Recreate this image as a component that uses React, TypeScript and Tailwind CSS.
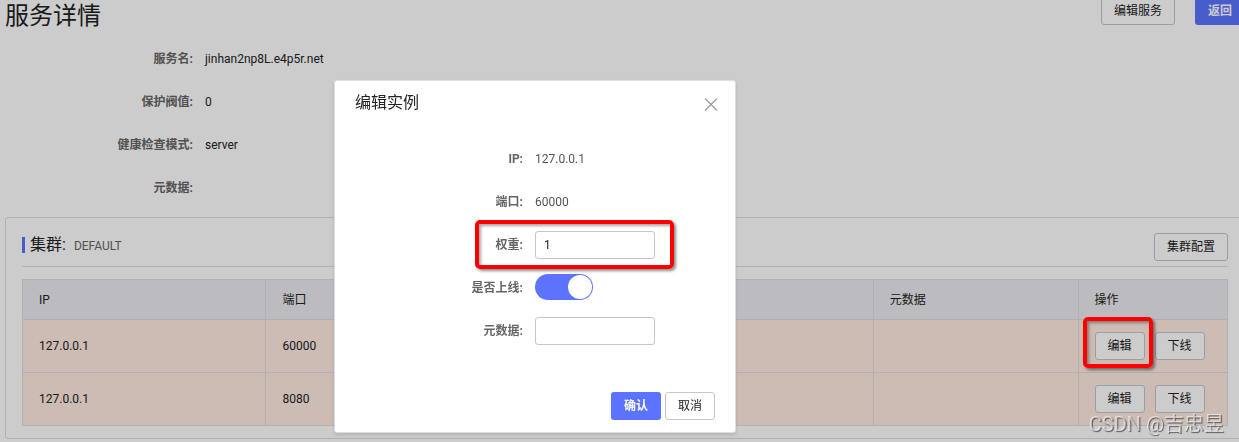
import React, { useState } from "react";

const instances = [
  { ip: "127.0.0.1", port: 60000, marked: true },
  { ip: "127.0.0.1", port: 8080, marked: false },
];

const service = [
  { label: "服务名:", value: "jinhan2np8L.e4p5r.net" },
  { label: "保护阀值:", value: "0" },
  { label: "健康检查模式:", value: "server" },
  { label: "元数据:", value: "" },
];

function Button({ children, primary = false }: { children: React.ReactNode; primary?: boolean }) {
  return (
    <button
      type="button"
      className={
        primary
          ? "h-7 shrink-0 rounded-[3px] bg-[#5c73ff] px-[13px] text-xs font-bold text-white"
          : "h-7 shrink-0 rounded-[3px] border border-[#c4c6cf] bg-white px-3 text-xs text-[#222]"
      }
    >
      {children}
    </button>
  );
}

function Mark({ className }: { className: string }) {
  return (
    <span
      aria-hidden="true"
      className={`pointer-events-none absolute z-30 rounded-[5px] border-4 border-[#fe0000] shadow-[2px_2px_3px_rgba(0,0,0,0.45),inset_2px_2px_3px_rgba(0,0,0,0.35)] ${className}`}
    />
  );
}

function Row({ label, htmlFor, children }: { label: string; htmlFor?: string; children: React.ReactNode }) {
  return (
    <div className="relative flex h-7 items-center">
      <label htmlFor={htmlFor} className="w-1/2 shrink-0 pr-3 text-right font-bold">
        {label}
      </label>
      {children}
    </div>
  );
}

function EditDialog() {
  const [weight, setWeight] = useState("1");
  const [online, setOnline] = useState(true);
  const [meta, setMeta] = useState("");
  const field =
    "h-7 w-[120px] rounded-[3px] border border-[#c4c6cf] bg-white px-2 text-xs text-[#222] outline-none";
  return (
    <div className="fixed inset-0 z-20 flex items-start justify-center bg-black/20 pt-20 pr-[169px]">
      <section
        role="dialog"
        aria-labelledby="dialog-title"
        className="w-[402px] rounded-[3px] border border-[#dcdee3] bg-white shadow-[0_2px_4px_rgba(0,0,0,0.12)]"
      >
        <header className="flex items-start justify-between px-5 pt-3">
          <h2 id="dialog-title" className="text-base leading-5 text-[#222]">编辑实例</h2>
          <button type="button" aria-label="关闭" className="mt-1 -mr-1">
            <svg viewBox="0 0 16 16" className="size-4" fill="none" stroke="#999" strokeWidth="1.2">
              <path d="M2 1.5 14 13.5M14 1.5 2 13.5" />
            </svg>
          </button>
        </header>
        <form className="flex flex-col gap-[15px] px-5 pt-8 text-xs text-[#666]">
          <Row label="IP:">
            <span className="text-[#555]">127.0.0.1</span>
          </Row>
          <Row label="端口:">
            <span className="text-[#555]">60000</span>
          </Row>
          <Row label="权重:" htmlFor="weight">
            <input id="weight" className={field} value={weight} onChange={(e) => setWeight(e.target.value)} />
            <Mark className="-top-[11px] left-[120px] h-[49px] w-[199px]" />
          </Row>
          <Row label="是否上线:" htmlFor="online">
            <input
              id="online"
              type="checkbox"
              role="switch"
              checked={online}
              onChange={(e) => setOnline(e.target.checked)}
              className="flex h-[26px] w-[58px] appearance-none self-start rounded-full bg-[#c4c6cf] p-px before:size-6 before:rounded-full before:bg-white checked:justify-end checked:bg-[#5c73ff]"
            />
          </Row>
          <Row label="元数据:" htmlFor="meta">
            <input id="meta" className={field} value={meta} onChange={(e) => setMeta(e.target.value)} />
          </Row>
        </form>
        <footer className="flex justify-end gap-1 px-5 pt-[47px] pb-3">
          <Button primary>确认</Button>
          <Button>取消</Button>
        </footer>
      </section>
    </div>
  );
}

export default function App() {
  const cell = "border border-[#dcdee3] px-4 text-left font-normal";
  return (
    <div className="min-h-screen overflow-hidden bg-white font-['Roboto','Noto_Sans_CJK_SC',sans-serif] text-xs text-[#222]">
      <main className="-mt-[3px] -mr-[6px] pl-[5px]">
        <header className="flex h-12 items-start justify-between">
          <h1 className="text-2xl leading-[38px]">服务详情</h1>
          <div className="flex gap-5">
            <Button>编辑服务</Button>
            <Button primary>返回</Button>
          </div>
        </header>
        <dl className="flex flex-col gap-[15px]">
          {service.map((item) => (
            <div key={item.label} className="flex h-7 items-center">
              <dt className="w-[200px] pr-3 text-right font-bold text-[#666]">{item.label}</dt>
              <dd>{item.value}</dd>
            </div>
          ))}
        </dl>
        <section className="mt-[15px] rounded-[3px] border border-[#dcdee3] px-4 pt-[15px] pb-3">
          <div className="flex items-start justify-between border-b border-[#dcdee3] pb-[5px]">
            <div className="flex items-center">
              <span className="mr-[5px] h-4 w-[3px] bg-[#5c73ff]" />
              <h2 className="flex items-baseline gap-2 text-base leading-6">
                集群:
                <span className="text-xs text-[#666]">DEFAULT</span>
              </h2>
            </div>
            <Button>集群配置</Button>
          </div>
          <table className="mt-3 w-full table-fixed border-collapse">
            <colgroup>
              <col className="w-[20.2%]" />
              <col className="w-[17%]" />
              <col />
              <col className="w-[17%]" />
              <col className="w-[12.4%]" />
            </colgroup>
            <thead>
              <tr className="h-10 bg-[#ebecf0]">
                <th className={cell}>IP</th>
                <th className={cell}>端口</th>
                <th className={cell} />
                <th className={cell}>元数据</th>
                <th className={cell}>操作</th>
              </tr>
            </thead>
            <tbody>
              {instances.map((row) => (
                <tr key={row.port} className="h-[53px] bg-[#ffebe2]">
                  <td className={cell}>{row.ip}</td>
                  <td className={cell}>{row.port}</td>
                  <td className={cell} />
                  <td className={cell} />
                  <td className={cell}>
                    <div className="relative flex gap-[10px]">
                      <Button>编辑</Button>
                      <Button>下线</Button>
                      {row.marked && <Mark className="-top-[15px] -left-3 h-[51px] w-[70px]" />}
                    </div>
                  </td>
                </tr>
              ))}
            </tbody>
          </table>
        </section>
      </main>
      <EditDialog />
      <p className="pointer-events-none fixed right-[15px] bottom-1 z-40 text-[20px] leading-7 text-white/60 [text-shadow:1px_1px_1px_rgba(0,0,0,0.55)]">
        CSDN @吉忠昱
      </p>
    </div>
  );
}
